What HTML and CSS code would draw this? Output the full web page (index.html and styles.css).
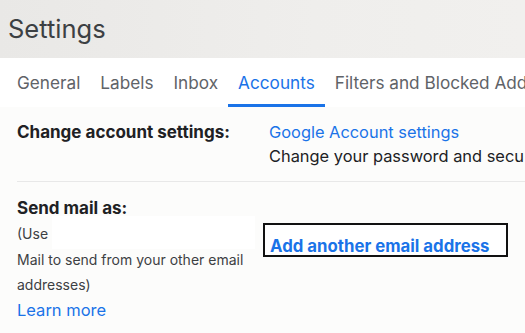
FILE: index.html
```html
<!DOCTYPE html>
<html lang="en">
<head>
  <meta charset="UTF-8">
  <title>Settings</title>
  <link rel="stylesheet" href="styles.css">
</head>
<body>
  <div class="header">
    <h1>Settings</h1>
  </div>

  <div class="tabs">
    <div class="tab">General</div>
    <div class="tab">Labels</div>
    <div class="tab">Inbox</div>
    <div class="tab active">Accounts</div>
    <div class="tab">Filters and Blocked Add</div>
  </div>

  <div class="content">
    <div class="row first">
      <div class="label">Change account settings:</div>
      <div class="value">
        <a class="link" href="#">Google Account settings</a>
        <p>Change your password and secu</p>
      </div>
    </div>

    <div class="row second">
      <div class="label">
        Send mail as:
        <p class="hint">(Use <span class="redacted"></span><br>Mail to send from your other email addresses)</p>
        <a class="link learn" href="#">Learn more</a>
      </div>
      <div class="value">
        <div class="add-box">
          <a class="link bold" href="#">Add another email address</a>
        </div>
      </div>
    </div>
  </div>
</body>
</html>
```

FILE: styles.css
```css
* {
  margin: 0;
  padding: 0;
  box-sizing: border-box;
}

body {
  font-family: Inter, Roboto, "Liberation Sans", sans-serif;
  background-color: #fcfcfb;
  color: #202124;
  width: 525px;
  height: 333px;
  overflow: hidden;
}

.header {
  height: 58px;
  padding-left: 8px;
  background: linear-gradient(90deg, #e9e8e6, #efeeec 60%, #f1f0ee);
}

.header h1 {
  font-size: 25.5px;
  font-weight: 400;
  color: #3c4043;
  line-height: 58px;
  white-space: nowrap;
}

.tabs {
  display: flex;
  height: 49px;
  padding-left: 7px;
  background-color: #fff;
  white-space: nowrap;
  overflow: hidden;
}

.tab {
  padding: 4px 10px 0;
  font-size: 17.2px;
  line-height: 42px;
  color: #5f6368;
  border-bottom: 3px solid transparent;
}

.tab.active {
  color: #1a73e8;
  border-bottom-color: #1a73e8;
  border-radius: 2px 2px 0 0;
}

.content {
  padding-left: 17px;
}

.row {
  display: flex;
  white-space: nowrap;
  overflow: hidden;
}

.row.first {
  padding-top: 13px;
  height: 75px;
  border-bottom: 1px solid #e8e8e8;
}

.label {
  width: 252px;
  flex-shrink: 0;
  font-size: 17px;
  font-weight: 700;
  color: #202124;
  line-height: 24px;
}

.value {
  font-size: 16.4px;
  line-height: 24px;
}

.value p {
  color: #202124;
}

.link {
  color: #1a73e8;
  text-decoration: none;
}

.row.second {
  padding-top: 14px;
}

.row.second .label {
  width: 246px;
  white-space: normal;
}

.hint {
  font-size: 14px;
  font-weight: 400;
  line-height: 25.5px;
  color: #3c4043;
  margin-top: 1px;
}

.redacted {
  display: inline-block;
  vertical-align: top;
  width: 203px;
  height: 33px;
  margin-top: -5px;
  margin-bottom: -3px;
  background-color: #fff;
}

.learn {
  display: block;
  font-weight: 400;
  font-size: 16.5px;
  line-height: 24px;
}

.add-box {
  margin-top: 27px;
  width: 245px;
  height: 34px;
  border: 2px solid #111;
  padding: 9px 0 0 5px;
  background-color: #fff;
}

.bold {
  font-weight: 700;
  font-size: 16.8px;
  line-height: 20px;
}
```
